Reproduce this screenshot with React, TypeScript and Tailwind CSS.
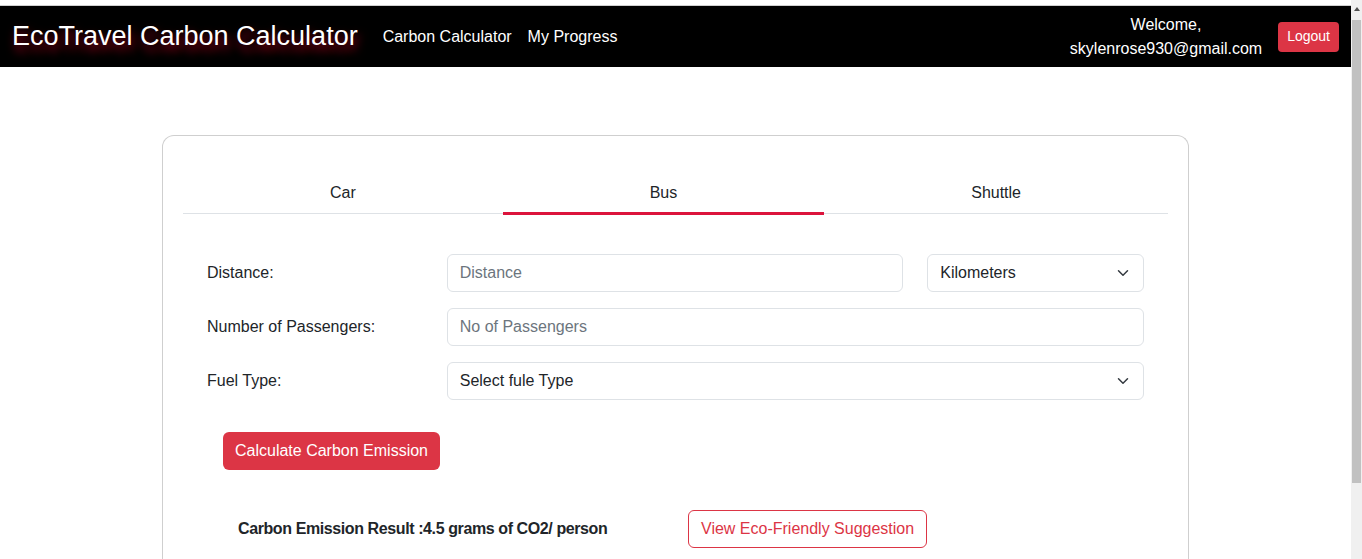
import React from "react";

function Chevron() {
  return (
    <svg width="16" height="12" viewBox="0 0 16 16" className="shrink-0">
      <path d="M2 5l6 6 6-6" fill="none" stroke="#343a40" strokeWidth="2" strokeLinecap="round" strokeLinejoin="round" />
    </svg>
  );
}

export default function App() {
  const font = { fontFamily: '"Liberation Sans", Arial, sans-serif' };
  return (
    <div className="flex h-[559px] w-[1362px] overflow-hidden bg-white text-[#212529]" style={font}>
      <div className="flex w-[1351px] flex-col">
        <div className="h-[6px] shrink-0 border-b border-[#d0d0d0] bg-white" />
        <nav className="flex h-[61px] shrink-0 items-center bg-black pl-[12px] pr-[12px]">
          <div className="text-[27px] leading-none text-white [text-shadow:2px_6px_10px_rgba(170,0,30,0.9)]">
            EcoTravel Carbon Calculator
          </div>
          <div className="ml-[25px] flex gap-[16px] text-[16px] text-white">
            <span>Carbon Calculator</span>
            <span>My Progress</span>
          </div>
          <div className="ml-auto flex items-center gap-[16px]">
            <div className="text-center text-[16px] leading-[24px] text-white">
              <div>Welcome,</div>
              <div>skylenrose930@gmail.com</div>
            </div>
            <button className="h-[30px] rounded-[4px] bg-[#dc3545] px-[9px] text-[14px] text-white">Logout</button>
          </div>
        </nav>
        <div className="flex shrink-0 pl-[162px] pt-[68px]">
          <div className="w-[1027px] rounded-t-[12px] border border-b-0 border-[#cfcfcf] px-[20px] pb-[100px] pt-[37px]">
            <div className="flex border-b border-[#dee2e6] text-[16px]">
              <div className="grow py-[8px] text-center leading-[24px]">Car</div>
              <div className="relative grow py-[8px] text-center leading-[24px]">
                Bus
                <div className="absolute bottom-[-2px] left-0 right-0 h-[3px] bg-[#dc143c]" />
              </div>
              <div className="grow py-[8px] text-center leading-[24px]">Shuttle</div>
            </div>
            <div className="flex flex-col gap-[16px] px-[24px] pt-[40px]">
              <div className="flex items-center">
                <label className="w-[240px] text-[16px]">Distance:</label>
                <div className="flex h-[38px] w-[457px] items-center rounded-[6px] border border-[#dee2e6] px-[12px] text-[16px] text-[#6c757d]">Distance</div>
                <div className="ml-[24px] flex h-[38px] w-[217px] items-center justify-between rounded-[6px] border border-[#dee2e6] pl-[12px] pr-[12px] text-[16px]">
                  <span>Kilometers</span>
                  <Chevron />
                </div>
              </div>
              <div className="flex items-center">
                <label className="w-[240px] text-[16px]">Number of Passengers:</label>
                <div className="flex h-[38px] w-[698px] items-center rounded-[6px] border border-[#dee2e6] px-[12px] text-[16px] text-[#6c757d]">No of Passengers</div>
              </div>
              <div className="flex items-center">
                <label className="w-[240px] text-[16px]">Fuel Type:</label>
                <div className="flex h-[38px] w-[698px] items-center justify-between rounded-[6px] border border-[#dee2e6] pl-[12px] pr-[12px] text-[16px]">
                  <span>Select fule Type</span>
                  <Chevron />
                </div>
              </div>
              <div className="pl-[16px] pt-[16px]">
                <button className="h-[38px] rounded-[6px] bg-[#dc3545] px-[12px] text-[16px] text-white">Calculate Carbon Emission</button>
              </div>
              <div className="flex items-center pl-[31px] pt-[24px]">
                <span className="w-[450px] text-[16px] font-bold tracking-[-0.4px]">Carbon Emission Result :4.5 grams of CO2/ person</span>
                <button className="h-[38px] rounded-[6px] border border-[#dc3545] px-[12px] text-[16px] text-[#dc3545]">View Eco-Friendly Suggestion</button>
              </div>
            </div>
          </div>
        </div>
      </div>
      <div className="flex w-[11px] flex-col bg-[#f0f0f0]">
        <div className="flex h-[13px] items-end justify-center pb-[2px]">
          <div className="h-0 w-0 border-x-[3px] border-b-[4px] border-x-transparent border-b-[#505050]" />
        </div>
        <div className="mx-[1px] mt-[7px] h-[463px] bg-[#c1c1c1]" />
      </div>
    </div>
  );
}
